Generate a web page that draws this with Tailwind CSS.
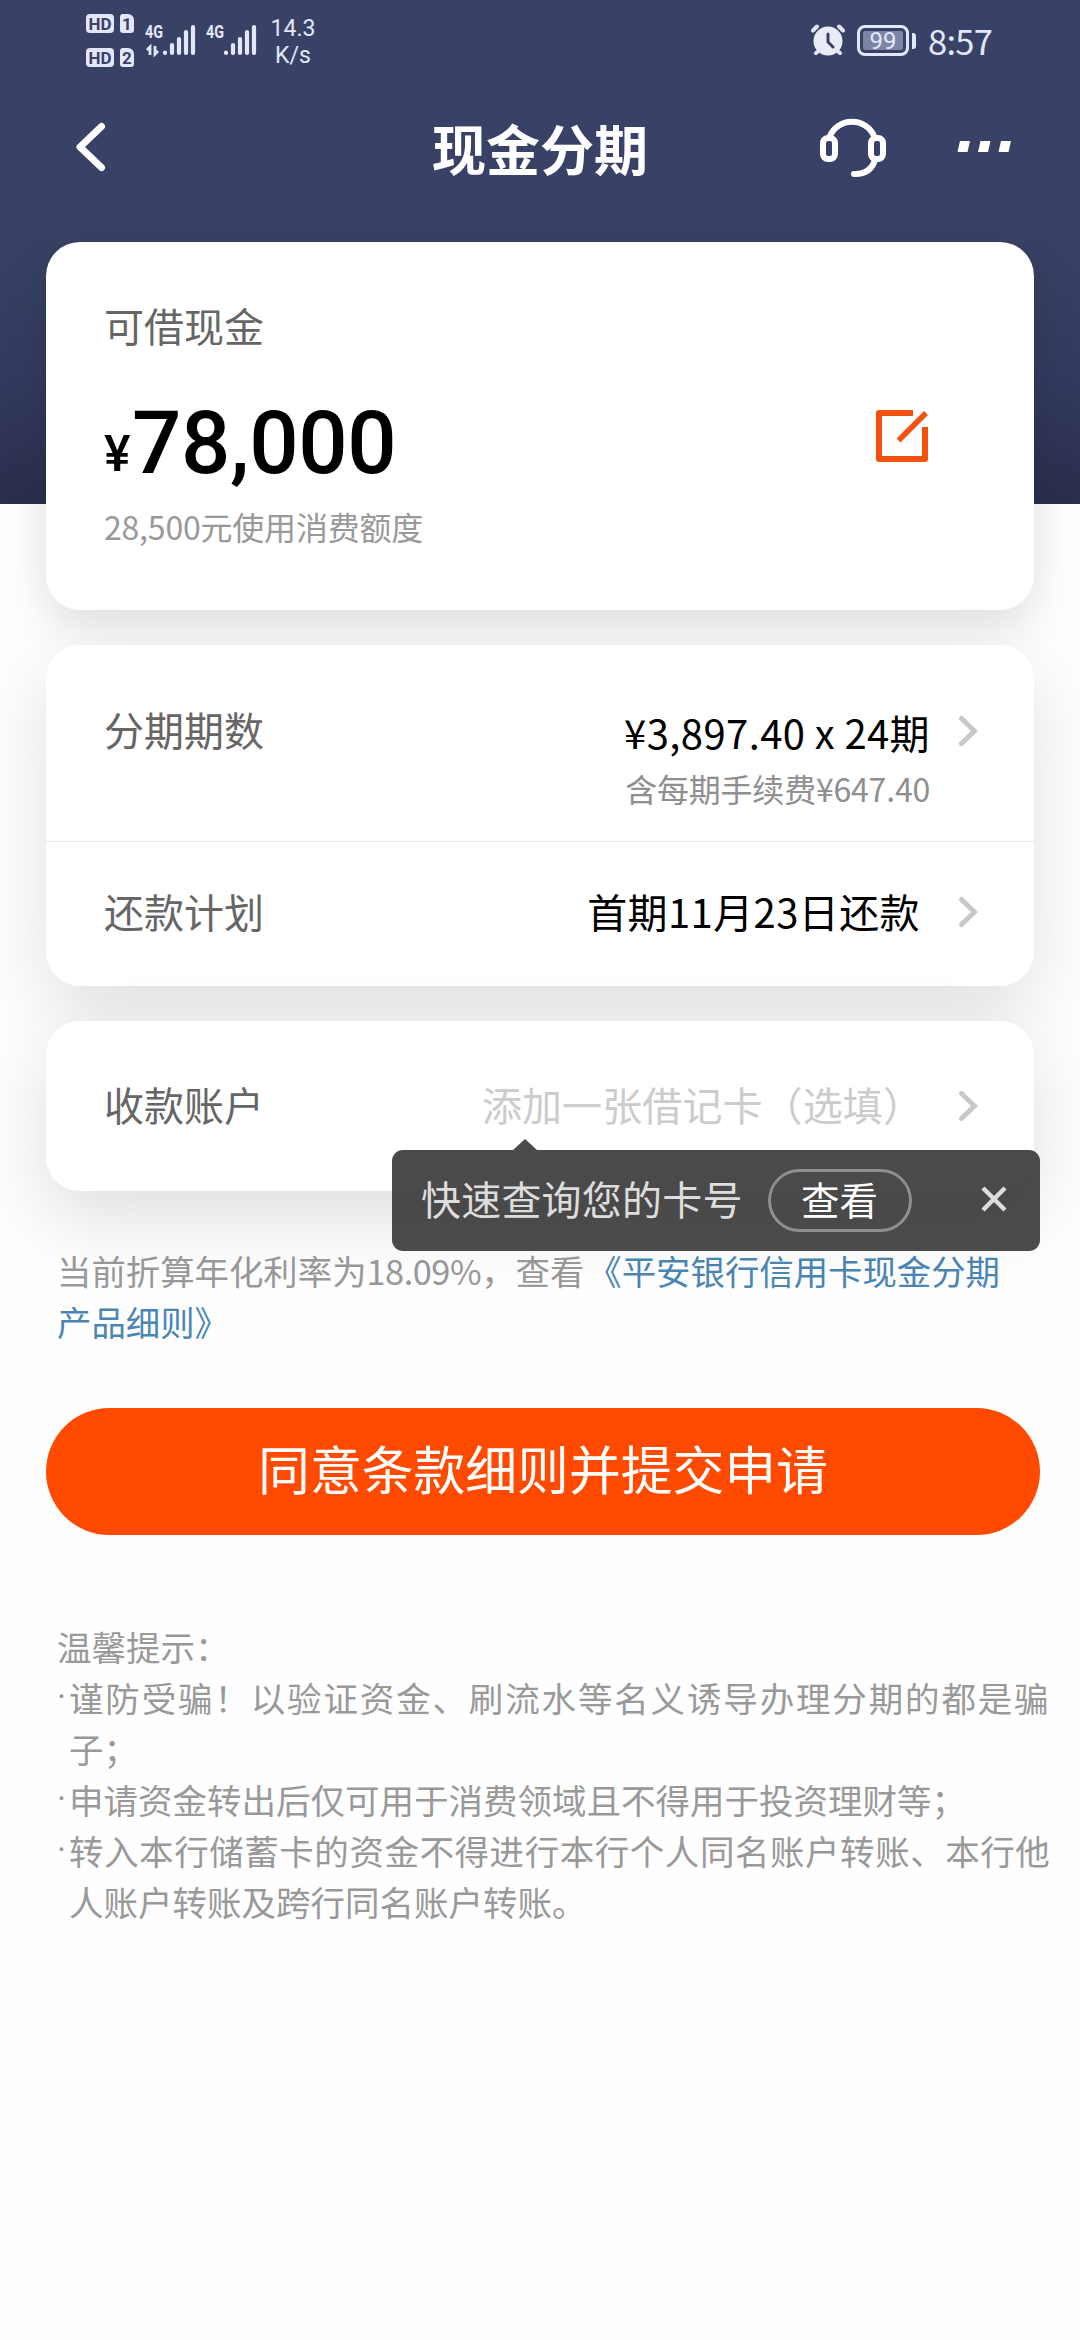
<!DOCTYPE html>
<html lang="zh-CN">
<head>
<meta charset="utf-8">
<title>现金分期</title>
<script src="https://cdn.jsdelivr.net/npm/@tailwindcss/browser@4"></script>
</head>
<body class="bg-[#fefefe] font-['Noto_Sans_CJK_SC',sans-serif] w-[1080px] h-[2340px] overflow-hidden">

<header class="h-[504px] bg-linear-to-b from-[#394266] from-45% via-[#333a5f] via-75% to-[#2b2e4c]">
  <!-- status bar -->
  <div class="h-20 flex pl-[86px] pr-[87px] text-[#e3e7fb]">
    <div class="flex flex-col gap-[15px] pt-[14px] text-[#394266] font-['Roboto',sans-serif] font-bold text-[17px]">
      <div class="flex gap-[6px]">
        <span class="w-7 h-[19px] rounded-[4px] bg-[#e3e7fb] leading-[20px] text-center">HD</span>
        <span class="w-[14px] h-[19px] rounded-[3px] rounded-tr-[6px] bg-[#e3e7fb] leading-[20px] text-center">1</span>
      </div>
      <div class="flex gap-[6px]">
        <span class="w-7 h-[19px] rounded-[4px] bg-[#e3e7fb] leading-[20px] text-center">HD</span>
        <span class="w-[14px] h-[19px] rounded-[3px] rounded-tr-[6px] bg-[#e3e7fb] leading-[20px] text-center">2</span>
      </div>
    </div>
    <svg class="ml-[11px] mt-[20px] w-[116px] h-[40px]" viewBox="0 0 116 40" fill="none" stroke="#e3e7fb">
      <g fill="#e3e7fb" stroke="none" font-family="Roboto, sans-serif" font-weight="700" font-size="19">
        <text x="0" y="18" textLength="18" lengthAdjust="spacingAndGlyphs">4G</text>
        <text x="61" y="18" textLength="18" lengthAdjust="spacingAndGlyphs">4G</text>
      </g>
      <path d="M2 30l3-3v8M10 26v8l3-3" stroke-width="2.800"/>
      <path d="M20 32.6v.4M27 25v8M34 19v14M41 12v21M48 7v26M81 32.6v.4M88 25v8M95 19v14M102 12v21M109 7v26" stroke-width="4.2" stroke-linecap="round"/>
    </svg>
    <div class="ml-[9px] mt-[15px] w-[46px] text-center font-['Roboto',sans-serif] text-[23px] leading-[27px]">14.3<br>K/s</div>
    <svg class="ml-auto mt-[23px] w-[34px] h-[34px]" viewBox="0 0 34 34" fill="none">
      <circle cx="17" cy="18" r="14.5" fill="#e9ebf6"/>
      <path d="M2 7.500l4-4M32 7.500l-4-4M5 30l4-3M29 30l-4-3" stroke="#e3e7fb" stroke-width="4" stroke-linecap="round"/>
      <path d="M17 11v8l5 5" stroke="#394266" stroke-width="3" stroke-linecap="round"/>
    </svg>
    <div class="ml-3 mt-[25px] w-[52px] h-[31px] rounded-[8px] border-[3px] border-[#e3e7fb] p-[3px]">
      <div class="h-[19px] rounded-[2px] bg-[#7e84a3] text-center font-['Roboto',sans-serif] text-[24px] leading-[20px]">99</div>
    </div>
    <div class="ml-[3px] mt-[33px] w-1 h-4 rounded-r-[3px] bg-[#e3e7fb]"></div>
    <div class="ml-[12px] mt-[21px] w-[65px] whitespace-nowrap text-[34.5px] leading-[38px] tracking-[-0.7px]">8:57</div>
  </div>
  <!-- title bar -->
  <div class="h-[134px] grid grid-cols-[1fr_216px_1fr] text-white">
    <svg class="ml-[74px] mt-[42px] w-[34px] h-[50px]" viewBox="0 0 34 50" fill="none" stroke="#fff" stroke-width="7" stroke-linecap="round" stroke-linejoin="round"><path d="M27.500 4.500L6 25l21.500 20.500"/></svg>
    <h1 class="mt-[38px] text-center text-[54px] leading-[60px] font-bold whitespace-nowrap">现金分期</h1>
    <div class="flex justify-end pr-[68px] pt-[36px] gap-[71px]">
      <svg class="w-[68px] h-[62px]" viewBox="0 0 68 62" fill="none" stroke="#fff" stroke-width="6">
        <path d="M12 20a23.500 22 0 0 1 44 0" />
        <rect x="5" y="22" width="12" height="21" rx="5"/>
        <rect x="53" y="22" width="12" height="21" rx="5"/>
        <path d="M57 44c-3 9-10 14.500-21 14" stroke-linecap="round"/>
      </svg>
      <svg class="mt-[25px] w-[55px] h-[11px]" viewBox="0 0 55 11" fill="#fff"><path d="M3 0h10l-2.500 11H.5zM23.500 0h10L31 11H21zM44 0h10l-2.500 11h-10z"/></svg>
    </div>
  </div>
</header>

<main class="relative -mt-[262px] pl-[46px] pr-10">
  <section class="w-[988px] h-[368px] rounded-[34px] bg-white shadow-[0_16px_45px_rgba(0,0,0,0.13)] pl-[58px] pr-[106px] pt-[63px]">
    <p class="text-[40px] leading-[40px] text-[#666]">可借现金</p>
    <div class="mt-[55px] h-[87px] flex justify-between">
      <p class="font-['Roboto',sans-serif] font-medium text-[87px] leading-[87px] tracking-[-0.4px] text-black flex"><span class="w-[27px] text-[50px] pt-[11px] mr-[1px]">¥</span>78,000</p>
      <svg class="mt-[10px] w-[52px] h-[52px]" viewBox="0 0 52 52" fill="none" stroke="#f4500f" stroke-width="6"><path d="M37 3H3v46h46V17" stroke-linejoin="round"/><path d="M22.500 30.500L50 3" stroke-width="5.500"/></svg>
    </div>
    <p class="mt-[23px] text-[32px] leading-[32px] tracking-[-0.2px] text-[#999]">28,500元使用消费额度</p>
  </section>

  <section class="mt-[35px] w-[988px] rounded-[34px] bg-white shadow-[0_26px_75px_rgba(0,0,0,0.12)]">
    <div class="h-[197px] border-b border-[#e8e8e8] flex items-start pl-[58px] pr-[56px] pt-[64px]">
      <span class="text-[40px] leading-[40px] text-[#666]">分期期数</span>
      <div class="ml-auto pt-[3px] flex flex-col items-end gap-[20px]">
        <span class="text-[40px] leading-[40px] tracking-[0.4px] text-black">¥3,897.40 x 24期</span>
        <span class="text-[32px] leading-[32px] tracking-[-0.2px] text-[#8f8f8f]">含每期手续费¥647.40</span>
      </div>
      <svg class="ml-[28px] mt-[6px] w-5 h-8" viewBox="0 0 20 32" fill="none" stroke="#c8c8c8" stroke-width="5" stroke-linecap="round"><path d="M3.500 3.500L16.500 16l-13 12.500"/></svg>
    </div>
    <div class="h-[144px] flex items-center pl-[58px] pr-[56px]">
      <span class="-mt-[6px] text-[40px] leading-[40px] text-[#666]">还款计划</span>
      <span class="-mt-[6px] ml-auto text-[40px] leading-[40px] tracking-[0.4px] text-black">首期11月23日还款</span>
      <svg class="ml-[38px] -mt-[4px] w-5 h-8" viewBox="0 0 20 32" fill="none" stroke="#c8c8c8" stroke-width="5" stroke-linecap="round"><path d="M3.500 3.500L16.500 16l-13 12.500"/></svg>
    </div>
  </section>

  <section class="relative z-10 mt-[35px] w-[988px] h-[170px] rounded-[34px] bg-white shadow-[0_26px_75px_rgba(0,0,0,0.13)] flex items-center pl-[58px] pr-[56px]">
    <span class="-mt-[4px] text-[40px] leading-[40px] text-[#666]">收款账户</span>
    <span class="-mt-[4px] ml-auto text-[40px] leading-[40px] tracking-[0.1px] text-[#ccc]">添加一张借记卡（选填）</span>
    <svg class="ml-[35px] w-5 h-8" viewBox="0 0 20 32" fill="none" stroke="#c8c8c8" stroke-width="5" stroke-linecap="round"><path d="M3.500 3.500L16.500 16l-13 12.500"/></svg>

    <!-- card lookup tooltip -->
    <div class="absolute left-[346px] top-[129px] w-[648px] h-[101px] rounded-[11px] bg-[#3f3f3f]/94 flex items-center pl-[29px] pr-[33px]">
      <svg class="absolute left-[121px] -top-[11px] w-6 h-[11px]" viewBox="0 0 24 11"><path d="M12 0l12 11H0z" fill="#3f3f3f" fill-opacity=".94"/></svg>
      <span class="-mt-[6px] text-[40px] leading-[40px] tracking-[0.2px] text-[#ddd]">快速查询您的卡号</span>
      <span class="ml-[25px] w-[144px] h-[63px] rounded-full border-[3px] border-[#8f8f8f] text-white text-[38.5px] leading-[52px] text-center">查看</span>
      <svg class="ml-auto -mt-[3px] w-[26px] h-[26px]" viewBox="0 0 26 26" stroke="#ddd" stroke-width="4.500"><path d="M2 2l22 22M24 2L2 24"/></svg>
    </div>
  </section>

  <p class="relative mt-[54px] ml-[11px] whitespace-nowrap text-[34.4px] leading-[51px] text-[#999]">当前折算年化利率为<span class="tracking-[-0.5px]">18.09%</span>，查看<span class="ml-[3px] text-[#4a86b4]">《平安银行信用卡现金分期<br>产品细则》</span></p>

  <button class="relative block mt-[61px] w-[994px] h-[127px] rounded-full bg-[#ff4a00] text-[51.8px] leading-[52px] pb-[7px] text-white">同意条款细则并提交申请</button>

  <div class="mt-[86px] ml-[11px] w-[993px] text-[34.5px] leading-[51.1px] text-[#999]">
    <p>温馨提示：</p>
    <ul>
      <li class="flex"><span class="w-[12px] shrink-0 overflow-hidden font-['Roboto',sans-serif]">·</span><p class="flex-1 whitespace-nowrap"><span class="block tracking-[1.85px]">谨防受骗！以验证资金、刷流水等名义诱导办理分期的都是骗</span>子；</p></li>
      <li class="flex"><span class="w-[12px] shrink-0 overflow-hidden font-['Roboto',sans-serif]">·</span><p class="flex-1 whitespace-nowrap">申请资金转出后仅可用于消费领域且不得用于投资理财等；</p></li>
      <li class="flex"><span class="w-[12px] shrink-0 overflow-hidden font-['Roboto',sans-serif]">·</span><p class="flex-1 whitespace-nowrap"><span class="block tracking-[0.55px]">转入本行储蓄卡的资金不得进行本行个人同名账户转账、本行他</span>人账户转账及跨行同名账户转账。</p></li>
    </ul>
  </div>
</main>
</body>
</html>
